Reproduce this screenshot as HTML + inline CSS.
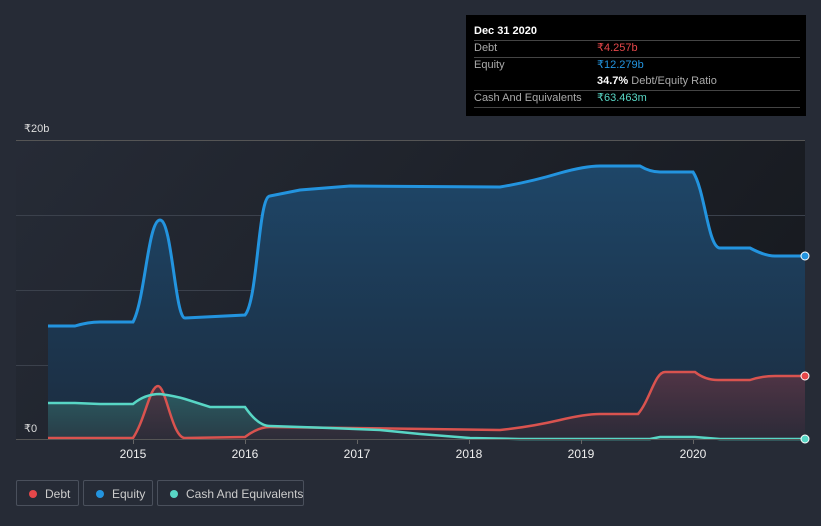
<!DOCTYPE html>
<html><head><meta charset="utf-8"><style>
body{margin:0;width:821px;height:526px;background:#262b36;font-family:"Liberation Sans",sans-serif;overflow:hidden;position:relative}
.tt{position:absolute;left:466px;top:15px;width:340px;height:101px;background:#000;color:#fff;font-size:11px;line-height:13px}
.tt div{white-space:nowrap}
.tt .r{position:absolute;left:8px;right:6px;border-top:1px solid #444}
.lbl{color:#aaa}
.leg{position:absolute;top:480px;height:26px;border:1px solid #4a505c;border-radius:2px;color:#ccc;font-size:12px;line-height:26px;box-sizing:border-box;white-space:nowrap}
.dot{position:absolute;left:12px;top:9px;width:8px;height:8px;border-radius:50%}
</style></head><body>
<svg width="821" height="526" style="position:absolute;left:0;top:0">
<defs>
<linearGradient id="bg" x1="0" x2="1" y1="0" y2="0.3"><stop offset="0" stop-color="#262b36"/><stop offset="1" stop-color="#181b21"/></linearGradient>
<linearGradient id="eq" x1="0" x2="0" y1="0" y2="1"><stop offset="0" stop-color="#1e4668"/><stop offset="1" stop-color="#1b2c3f"/></linearGradient>
<linearGradient id="db" x1="0" x2="0" y1="0" y2="1"><stop offset="0" stop-color="#5a3545"/><stop offset="1" stop-color="#2e2a36"/></linearGradient>
<linearGradient id="cs" x1="0" x2="0" y1="0" y2="1"><stop offset="0" stop-color="#2c5d62"/><stop offset="1" stop-color="#2a3e48"/></linearGradient>
</defs>
<rect x="16" y="140" width="789" height="299" fill="url(#bg)"/>
<g stroke="#3b414c" stroke-width="1">
<line x1="16" x2="805" y1="140.5" y2="140.5" stroke="#555"/>
<line x1="16" x2="805" y1="215.5" y2="215.5"/>
<line x1="16" x2="805" y1="290.5" y2="290.5"/>
<line x1="16" x2="805" y1="365.5" y2="365.5"/>
</g>
<path d="M48,326 L75,326 Q88,322 100,322 L133,322 C145,300 148,220 160,220 C172,220 175,318 185,318 L245,315 C258,300 258,196 270,196 L300,190 L350,186 L500,187 Q530,182 560,173 Q585,166 600,166 L640,166 Q650,172 660,172 L693,172 C705,190 708,248 720,248 L750,248 Q765,256 775,256 L805,256 L805,439 L48,439Z" fill="url(#eq)"/>
<path d="M48,403 L75,403 L100,404 L133,404 Q145,394 160,394 Q175,396 185,399 L210,407 L245,407 Q258,426 270,426 L330,428 L380,430 L420,434 L470,438 L520,439 L650,439 L660,437 L695,437 L720,439 L805,439 L805,439 L48,439Z" fill="url(#cs)" opacity="0.9"/>
<path d="M48,438 L133,438 C145,420 150,386 158,386 C166,386 172,438 185,438 L245,437 Q258,427 270,427 L350,428 L500,430 Q530,427 560,420 Q585,414 600,414 L638,414 C650,400 655,372 665,372 L695,372 Q705,380 718,380 L750,380 Q762,376 775,376 L805,376 L805,439 L48,439Z" fill="url(#db)" opacity="0.85"/>
<path d="M48,326 L75,326 Q88,322 100,322 L133,322 C145,300 148,220 160,220 C172,220 175,318 185,318 L245,315 C258,300 258,196 270,196 L300,190 L350,186 L500,187 Q530,182 560,173 Q585,166 600,166 L640,166 Q650,172 660,172 L693,172 C705,190 708,248 720,248 L750,248 Q765,256 775,256 L805,256" fill="none" stroke="#2394df" stroke-width="3"/>
<path d="M48,438 L133,438 C145,420 150,386 158,386 C166,386 172,438 185,438 L245,437 Q258,427 270,427 L350,428 L500,430 Q530,427 560,420 Q585,414 600,414 L638,414 C650,400 655,372 665,372 L695,372 Q705,380 718,380 L750,380 Q762,376 775,376 L805,376" fill="none" stroke="#d9534f" stroke-width="2.5"/>
<path d="M48,403 L75,403 L100,404 L133,404 Q145,394 160,394 Q175,396 185,399 L210,407 L245,407 Q258,426 270,426 L330,428 L380,430 L420,434 L470,438 L520,439 L650,439 L660,437 L695,437 L720,439 L805,439" fill="none" stroke="#58d6c5" stroke-width="2.5"/>
<line x1="16" x2="805" y1="439.5" y2="439.5" stroke="#555"/>
<g stroke="#666"><line x1="133.5" x2="133.5" y1="440" y2="444"/><line x1="245.5" x2="245.5" y1="440" y2="444"/><line x1="357.5" x2="357.5" y1="440" y2="444"/><line x1="469.5" x2="469.5" y1="440" y2="444"/><line x1="581.5" x2="581.5" y1="440" y2="444"/><line x1="693.5" x2="693.5" y1="440" y2="444"/></g>
<circle cx="805" cy="256" r="4" fill="#2394df" stroke="#fff" stroke-width="1"/>
<circle cx="805" cy="376" r="4" fill="#e5474a" stroke="#fff" stroke-width="1"/>
<circle cx="805" cy="439" r="4" fill="#58d6c5" stroke="#fff" stroke-width="1"/>
<g fill="#ddd" font-size="11" font-family="Liberation Sans,sans-serif">
<text x="24" y="132">₹20b</text><text x="24" y="432">₹0</text>
<g text-anchor="middle" font-size="12" fill="#eee"><text x="133" y="458">2015</text><text x="245" y="458">2016</text><text x="357" y="458">2017</text><text x="469" y="458">2018</text><text x="581" y="458">2019</text><text x="693" y="458">2020</text></g>
</g>
</svg>
<div class="tt">
<div style="position:absolute;left:8px;top:10px;font-weight:bold">Dec 31 2020</div>
<div class="r" style="top:25px"></div>
<div style="position:absolute;left:8px;top:27px" class="lbl">Debt</div><div style="position:absolute;left:131px;top:27px;color:#e5474a">₹4.257b</div>
<div class="r" style="top:42px"></div>
<div style="position:absolute;left:8px;top:44px" class="lbl">Equity</div><div style="position:absolute;left:131px;top:44px;color:#2394df">₹12.279b</div>
<div style="position:absolute;left:131px;top:60px"><b>34.7%</b> <span class="lbl">Debt/Equity Ratio</span></div>
<div class="r" style="top:75px"></div>
<div style="position:absolute;left:8px;top:77px" class="lbl">Cash And Equivalents</div><div style="position:absolute;left:131px;top:77px;color:#58d6c5">₹63.463m</div>
<div class="r" style="top:92px"></div>
</div>
<div class="leg" style="left:16px;width:63px"><span class="dot" style="background:#e5474a"></span><span style="position:absolute;left:28px">Debt</span></div>
<div class="leg" style="left:83px;width:70px"><span class="dot" style="background:#2394df"></span><span style="position:absolute;left:28px">Equity</span></div>
<div class="leg" style="left:157px;width:147px"><span class="dot" style="background:#58d6c5"></span><span style="position:absolute;left:28px">Cash And Equivalents</span></div>
</body></html>
